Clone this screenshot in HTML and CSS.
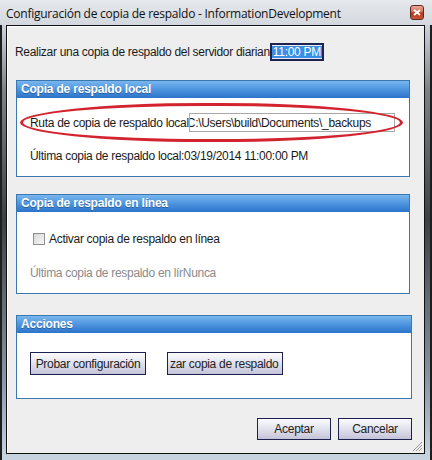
FILE: index.html
```html
<!DOCTYPE html>
<html lang="es">
  <head>
    <meta charset="UTF-8" />
    <title>Configuración de copia de respaldo</title>
    <link rel="stylesheet" href="styles.css">
  </head>
  <body>
    <div class="ventana">
      <div class="titulo">
        <span class="titulo-texto">Configuración de copia de respaldo - InformationDevelopment</span>
        <span class="cerrar">
          <svg width="8" height="7" viewBox="0 0 8 7"><path d="M1 1 L7 6 M7 1 L1 6" stroke="#fff" stroke-width="2"/></svg>
        </span>
      </div>
      <div class="contenido">
        <div class="fila-hora">
          <span>Realizar una copia de respaldo del servidor diarian</span>
          <span class="hora"><span class="sel">11:00 PM</span></span>
        </div>

        <div class="panel panel-local">
          <div class="panel-cab">Copia de respaldo local</div>
          <div class="panel-cuerpo">
            <div class="fila-ruta">
              <span class="etiqueta">Ruta de copia de respaldo local</span>
              <span class="campo"><span class="campo-texto">C:\Users\build\Documents\_backups</span></span>
            </div>
            <div class="linea">Última copia de respaldo local:03/19/2014 11:00:00 PM</div>
            <div class="ovalo"></div>
          </div>
        </div>

        <div class="panel panel-linea">
          <div class="panel-cab">Copia de respaldo en línea</div>
          <div class="panel-cuerpo">
            <label class="check"><span class="caja"></span>Activar copia de respaldo en línea</label>
            <div class="linea gris">Última copia de respaldo en lírNunca</div>
          </div>
        </div>

        <div class="panel panel-acciones">
          <div class="panel-cab">Acciones</div>
          <div class="panel-cuerpo acciones">
            <button class="boton ancho">Probar configuración</button>
            <button class="boton ancho izq">zar copia de respaldo</button>
          </div>
        </div>

        <div class="pie">
          <button class="boton final">Aceptar</button>
          <button class="boton final">Cancelar</button>
        </div>
        <svg class="agarre" width="12" height="12" viewBox="0 0 12 12">
          <path d="M11 2 L2 11 M11 5 L5 11 M11 8 L8 11" stroke="#9a9a9a" stroke-width="1"/>
        </svg>
      </div>
    </div>
  </body>
</html>
```

FILE: styles.css
```css
body,
html {
  margin: 0;
  background-color: #ffffff;
  font-family: "Liberation Sans", Arial, sans-serif;
  font-size: 12px;
  letter-spacing: -0.3px;
  color: #1a1a1a;
}
.ventana {
  width: 432px;
  height: 460px;
  box-sizing: border-box;
  padding: 0 5px 6px 4px;
  background: linear-gradient(to bottom, #dfe3e8 0, #cdd3da 25px, #7c8288 90px, #3c4045 220px, #8a96a3 380px, #c9d6e2 460px);
  border-left: 2px solid #1e1e1e;
  border-right: 2px solid #1e1e1e;
  display: flex;
  flex-direction: column;
}
.titulo {
  height: 25px;
  display: flex;
  align-items: center;
  justify-content: space-between;
  margin-left: -6px;
  margin-right: -7px;
  padding: 0 8px 0 6px;
  background: linear-gradient(to bottom, #e6e9ed, #d3d8de);
}
.titulo-texto {
  font-family: "Open Sans", "Noto Sans", sans-serif;
  font-size: 12px;
  letter-spacing: -0.25px;
  color: #111;
  padding-top: 1px;
}
.cerrar {
  width: 14px;
  height: 15px;
  box-sizing: border-box;
  border: 1px solid #5a2a24;
  border-radius: 3px;
  background: linear-gradient(to bottom, #e9a89a 0, #d56a52 45%, #b93418 55%, #c8563a 100%);
  display: flex;
  align-items: center;
  justify-content: center;
}
.contenido {
  flex: 1;
  position: relative;
  background-color: #eeeeee;
  border: 1px solid #111;
  box-shadow: inset 1px 1px 0 #ffffff;
  padding: 17px 12px 13px 8px;
  display: flex;
  flex-direction: column;
}
.fila-hora {
  height: 18px;
  display: flex;
  align-items: center;
}
.hora {
  height: 18px;
  box-sizing: border-box;
  border: 2px solid #1b2452;
  padding: 1px 0;
  display: flex;
}
.sel {
  background-color: #3a8ee6;
  color: #fff;
  padding: 0 1px;
  line-height: 12px;
}
.panel {
  width: 394px;
  margin-left: 1px;
  border: 1px solid #3a78b0;
  background-color: #ffffff;
}
.panel-local {
  margin-top: 19px;
  height: 97px;
  box-sizing: border-box;
}
.panel-linea {
  margin-top: 17px;
  height: 100px;
  box-sizing: border-box;
}
.panel-acciones {
  margin-top: 21px;
  height: 84px;
  width: 396px;
  box-sizing: border-box;
}
.panel-cab {
  height: 17px;
  line-height: 17px;
  padding-left: 4px;
  background: linear-gradient(to bottom, #7ab6ee 0, #4d95df 50%, #2c73cb 100%);
  color: #fff;
  font-weight: bold;
  letter-spacing: -0.2px;
  text-shadow: 0 1px 0 #2b5f9a;
}
.panel-cuerpo {
  position: relative;
  padding-left: 13px;
}
.panel-local .panel-cuerpo {
  padding-top: 15px;
}
.fila-ruta {
  height: 19px;
  display: flex;
  align-items: center;
}
.etiqueta {
  flex: none;
  white-space: nowrap;
}
.campo {
  flex: none;
  width: 206px;
  height: 19px;
  box-sizing: border-box;
  border: 1px solid #a8a8a8;
  background: #fff;
  overflow: hidden;
  display: flex;
  align-items: center;
  white-space: nowrap;
}
.campo-texto {
  margin-left: -3px;
}
.linea {
  margin-top: 17px;
  height: 14px;
  line-height: 14px;
}
.gris {
  color: #8a8a8a;
}
.ovalo {
  position: absolute;
  left: 3px;
  top: 5px;
  width: 377px;
  height: 33px;
  border: 3px solid #d3232e;
  border-radius: 48% / 50%;
}
.panel-linea .panel-cuerpo {
  padding-top: 20px;
}
.panel-linea .linea {
  margin-top: 20px;
}
.check {
  height: 14px;
  display: flex;
  align-items: center;
  padding-left: 3px;
}
.caja {
  width: 10px;
  height: 10px;
  border: 1px solid #8e8f8f;
  background: linear-gradient(to bottom right, #d8d8d8, #f6f6f6);
  margin-right: 4px;
}
.acciones {
  padding-top: 19px;
  display: flex;
  gap: 21px;
}
.boton {
  font-family: "Liberation Sans", Arial, sans-serif;
  font-size: 12px;
  letter-spacing: -0.3px;
  color: #222;
  border: 1px solid #1d1f4e;
  background: linear-gradient(to bottom, #fbfbfe 0, #e4e4ef 45%, #c4c4d8 100%);
  padding: 0;
  height: 23px;
  white-space: nowrap;
  overflow: hidden;
}
.ancho {
  width: 116px;
}
.izq {
  text-align: left;
  padding-left: 2px;
}
.pie {
  margin-top: auto;
  display: flex;
  justify-content: flex-end;
  gap: 7px;
}
.final {
  width: 74px;
  height: 22px;
}
.agarre {
  position: absolute;
  right: 1px;
  bottom: 1px;
}
```
